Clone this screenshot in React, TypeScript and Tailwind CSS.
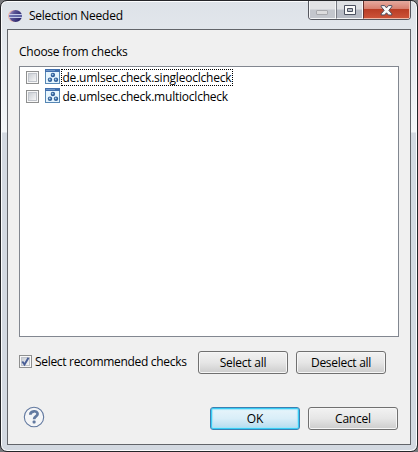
import React from "react";

const FONT = "font-['Open_Sans','Noto_Sans',sans-serif]";

function EclipseLogo() {
  return (
    <svg width="16" height="16" viewBox="0 0 16 16" className="shrink-0">
      <defs>
        <linearGradient id="ecl" x1="0" y1="0" x2="1" y2="0.5">
          <stop offset="0" stopColor="#b9a3cf" />
          <stop offset="0.4" stopColor="#5a5495" />
          <stop offset="1" stopColor="#29246a" />
        </linearGradient>
      </defs>
      <ellipse cx="6.8" cy="8" rx="5.8" ry="6" fill="#eab5ae" />
      <ellipse cx="8.6" cy="8" rx="6.4" ry="6.1" fill="url(#ecl)" />
      <path d="M2 6.5h13M2 9.5h13" stroke="#c5cbea" strokeWidth="1" />
      <path d="M2 8h13" stroke="#6c74b4" strokeWidth="1.6" />
    </svg>
  );
}

function CheckIcon() {
  return (
    <svg width="15" height="15" viewBox="0 0 15 15" className="shrink-0">
      <rect x="0.5" y="0.5" width="14" height="14" fill="#e6f5fe" stroke="#5787b4" />
      <rect x="0" y="0" width="15" height="3" fill="#416fad" />
      <rect x="1" y="1" width="9" height="1" fill="#6e96c8" />
      {[
        [7.9, 6],
        [5, 10.8],
        [11, 10.8],
      ].map(([x, y]) => (
        <g key={`${x}-${y}`}>
          <circle cx={x} cy={y} r="2.2" fill="#315f99" />
          <circle cx={x - 0.3} cy={y - 0.4} r="0.9" fill="#a9cce9" />
        </g>
      ))}
    </svg>
  );
}

function Checkbox({ checked = false }: { checked?: boolean }) {
  return (
    <span className="flex h-[13px] w-[13px] shrink-0 border border-[#8e8f8f] bg-[#f8f8f8] p-px">
      <span className="block h-[9px] w-[9px] border border-[#c0c4cb] bg-linear-to-br from-[#cbcfd5] to-[#f6f6f6]">
        {checked && (
          <svg width="9" height="9" viewBox="0 0 9 9" className="-mt-px -ml-px block overflow-visible">
            <path d="M1.3 4.5L3.5 7.5L7.5 0.8" fill="none" stroke="#4a5f97" strokeWidth="2" />
          </svg>
        )}
      </span>
    </span>
  );
}

function Item({ label, focused = false }: { label: string; focused?: boolean }) {
  return (
    <div className="flex h-[19px] items-start pl-1.5">
      <div className="pt-[3px]">
        <Checkbox />
      </div>
      <div className="ml-1.5 pt-px">
        <CheckIcon />
      </div>
      <div
        className={`ml-px mt-px flex h-[17px] items-center whitespace-nowrap border border-dotted ${
          focused ? "w-[172px] border-black" : "border-transparent"
        }`}
      >
        <span className="pl-[0.5px] tracking-[-0.22px]">{label}</span>
      </div>
    </div>
  );
}

function Button({ label, primary = false, spacing = "" }: { label: string; primary?: boolean; spacing?: string }) {
  return (
    <button
      className={`flex h-[23px] w-[90px] items-center justify-center rounded-[3px] border bg-linear-to-b pt-px ${
        primary
          ? "border-[#3c7fb1] from-[#e8f5fb] from-0% via-[#d9eef8] via-50% to-[#b4dbee] shadow-[inset_0_0_0_1px_#38cdf5,inset_0_0_1px_2px_#a5e4f8]"
          : "border-[#707070] from-[#f2f2f2] from-0% via-[#e6e6e6] via-50% to-[#cdcdcd] shadow-[inset_0_0_0_1px_#f6f6f6]"
      }`}
    >
      <span className={spacing}>{label}</span>
    </button>
  );
}

function WindowControls() {
  return (
    <div className="flex h-[19px] w-[103px] overflow-hidden rounded-b-[4px] border border-t-0 border-[#55575f]">
      <div className="flex w-[27px] items-center justify-center border border-t-0 border-[#f4f5f7] bg-linear-to-b from-[#e2e3e6] from-48% to-[#c3c6cd] to-52%">
        <svg width="13" height="6" viewBox="0 0 13 6" className="mt-1.5">
          <rect x="0.5" y="0.5" width="11" height="4" rx="0.5" fill="#dcdcde" stroke="#a7a8ad" />
        </svg>
      </div>
      <div className="flex w-[27px] items-center justify-center border border-t-0 border-[#f4f5f7] border-l-[#777a83] bg-linear-to-b from-[#dddfe3] from-48% to-[#b7bbc5] to-52%">
        <svg width="12" height="10" viewBox="0 0 12 10" className="mt-px">
          <path d="M.5 .5h11v9H.5z" fill="#fafafa" stroke="#4b5060" />
          <path d="M3.5 3.5h5v3h-5z" fill="#b9bec8" stroke="#4b5060" />
        </svg>
      </div>
      <div className="flex flex-1 items-center justify-center border border-t-0 border-[#f1b9a7] border-l-[#65302b] bg-[linear-gradient(to_bottom,#e5aa9f_0%,#d8806f_46%,#b93d25_50%,#cc5238_100%)]">
        <svg width="13" height="11" viewBox="0 0 13 11" className="mt-px">
          <path
            d="M1.2 .6h3.4L6.5 2.9 8.4.6h3.4v1.2L8.8 5.3l3 3.5V10H8.4L6.5 7.8 4.6 10H1.2V8.8l3-3.5-3-3.5z"
            fill="#fafafa"
            stroke="#4c4d5e"
            strokeWidth="1"
          />
        </svg>
      </div>
    </div>
  );
}

function HelpIcon() {
  return (
    <svg width="22" height="22" viewBox="0 0 22 22">
      <circle cx="11" cy="11" r="9.7" fill="#f4f5f7" stroke="#61789f" strokeWidth="1.1" />
      <path
        d="M7.3 8.8C7.3 4.4 14.6 4.1 14.6 8C14.6 10.5 11.1 10.3 11.1 13.2"
        fill="none"
        stroke="#637aa0"
        strokeWidth="2.7"
      />
      <rect x="9.6" y="14.6" width="3" height="2.8" rx="1" fill="#637aa0" />
    </svg>
  );
}

export default function App() {
  return (
    <div className={`h-[452px] w-[418px] bg-[#77787c] text-[12px] leading-4 text-black ${FONT}`}>
      <div className="flex h-full flex-col overflow-hidden rounded-[7px] border border-[#242529] bg-linear-to-b from-[#dde2e8] from-0% via-[#f4f7f9] via-[131px] to-[#d3d9e1] to-[132px] px-1.5 pb-1.5 shadow-[inset_0_0_0_1px_#fbfcfd]">
        <div className="flex h-7 shrink-0 items-start justify-between">
          <div className="flex items-center gap-1 pt-[6px]">
            <EclipseLogo />
            <span className="whitespace-nowrap pt-px pl-[2px] tracking-[-0.25px]">Selection Needed</span>
          </div>
          <WindowControls />
        </div>
        <div className="flex min-h-0 flex-1 flex-col border border-[#62656a] bg-[#f0f0f0] pl-[11px]">
          <div className="mt-[14px] h-[22px] whitespace-nowrap">
            <span className="tracking-[-0.25px]">Choose from checks</span>
          </div>
          <div className="h-[271px] w-[380px] shrink-0 border border-[#828790] bg-white pt-px">
            <Item label="de.umlsec.check.singleoclcheck" focused />
            <Item label="de.umlsec.check.multioclcheck" />
          </div>
          <div className="mt-[14px] flex h-[23px] shrink-0 items-center">
            <div className="flex h-[23px] w-[179px] items-start gap-[3px] whitespace-nowrap pt-1">
              <Checkbox checked />
              <span className="-mt-px tracking-[-0.31px]">Select recommended checks</span>
            </div>
            <div className="flex gap-2">
              <Button label="Select all" spacing="tracking-[-0.25px]" />
              <Button label="Deselect all" spacing="tracking-[-0.3px]" />
            </div>
          </div>
          <div className="mt-[33px] flex h-[23px] items-start pl-1">
            <div className="-mt-px w-[187px]">
              <HelpIcon />
            </div>
            <div className="flex gap-2">
              <Button label="OK" primary />
              <Button label="Cancel" spacing="tracking-[-0.2px]" />
            </div>
          </div>
        </div>
      </div>
    </div>
  );
}
